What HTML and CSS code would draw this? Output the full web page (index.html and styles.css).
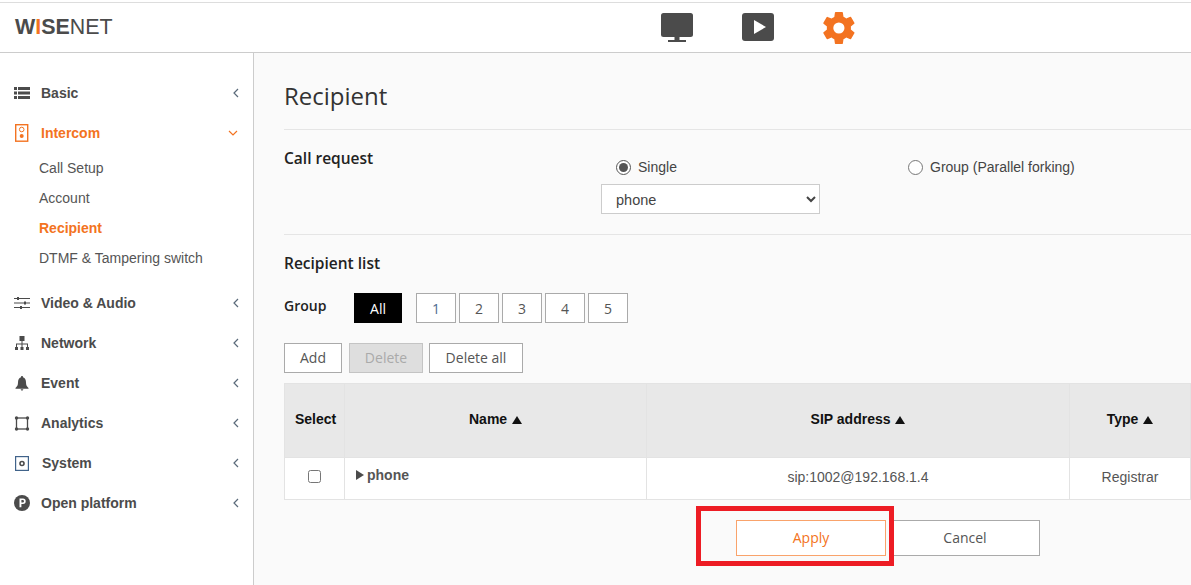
FILE: index.html
```html
<!DOCTYPE html>
<html lang="en">
<head>
<meta charset="utf-8">
<title>Recipient</title>
<link rel="stylesheet" href="styles.css">
</head>
<body>
<header class="topbar">
  <div class="logo"><span class="logo-strong">W<span class="logo-i">I</span>SE</span><span class="logo-light">NET</span></div>
  <nav class="topnav">
    <svg class="topicon" width="32" height="29" viewBox="0 0 32 29"><rect width="32" height="24" rx="2.5" fill="#4b4b4b"/><rect x="13.500" y="24" width="5" height="3" fill="#4b4b4b"/><rect x="7" y="27" width="18" height="2" fill="#4b4b4b"/></svg>
    <svg class="topicon" width="32" height="28" viewBox="0 0 32 28"><rect width="32" height="28" rx="3" fill="#4b4b4b"/><path d="M12 7v14l12-7z" fill="#fff"/></svg>
    <svg class="topicon gear" width="32" height="32" viewBox="2 2 20 20"><path fill="#f37321" d="M19.4 13c.04-.33.06-.66.06-1s-.02-.67-.06-1l2.100-1.650a.5.5 0 0 0 .12-.64l-2-3.460a.5.5 0 0 0-.6-.22l-2.490 1a7.300 7.300 0 0 0-1.730-1l-.38-2.650A.5.5 0 0 0 13.930 2h-4a.5.5 0 0 0-.49.42L9.060 5.070c-.62.25-1.200.59-1.730 1l-2.490-1a.5.5 0 0 0-.6.22l-2 3.460a.5.5 0 0 0 .12.64L4.460 11a8 8 0 0 0 0 2l-2.100 1.650a.5.5 0 0 0-.12.64l2 3.460c.12.22.38.3.6.22l2.490-1c.53.41 1.110.75 1.730 1l.38 2.650c.04.24.25.42.49.42h4c.24 0 .45-.18.49-.42l.38-2.650c.62-.25 1.200-.59 1.730-1l2.490 1c.22.08.48 0 .6-.22l2-3.460a.5.5 0 0 0-.12-.64zM11.930 15.500a3.500 3.500 0 1 1 0-7 3.500 3.500 0 0 1 0 7z"/></svg>
  </nav>
</header>
<div class="shell">
  <aside class="sidebar">
    <div class="menu-item">
      <svg class="mi-icon" width="16" height="12" viewBox="0 0 16 12"><path fill="#4b4b4b" d="M0 0h3v3H0zM4 0h12v3H4zM0 4.500h3v3H0zM4 4.500h12v3H4zM0 9h3v3H0zM4 9h12v3H4z"/></svg>
      <span class="mi-label">Basic</span>
      <svg class="chev" width="6" height="10" viewBox="0 0 6 10"><path d="M5 1 1 5l4 4" fill="none" stroke="#5a6a7a" stroke-width="1.200"/></svg>
    </div>
    <div class="menu-item active">
      <svg class="mi-icon" width="16" height="18" viewBox="0 0 16 18"><rect x="1.700" y="0.700" width="12" height="16.500" fill="none" stroke="#f37321" stroke-width="1.400"/><circle cx="7.700" cy="5.500" r="2.300" fill="none" stroke="#f37321"/><circle cx="7.700" cy="12" r="2" fill="#f37321"/></svg>
      <span class="mi-label">Intercom</span>
      <svg class="chev-down" width="10" height="6" viewBox="0 0 10 6"><path d="M1 1l4 4 4-4" fill="none" stroke="#f37321" stroke-width="1.200"/></svg>
    </div>
    <ul class="submenu">
      <li>Call Setup</li>
      <li>Account</li>
      <li class="current">Recipient</li>
      <li>DTMF &amp; Tampering switch</li>
    </ul>
    <div class="menu-item">
      <svg class="mi-icon" width="16" height="12" viewBox="0 0 16 12"><path fill="#4b4b4b" d="M0 1h16v1H0zM0 5.500h16v1H0zM0 10h16v1H0zM3 0h2v3H3zM10 4.500h2v3h-2zM6 9h2v3H6z"/></svg>
      <span class="mi-label">Video &amp; Audio</span>
      <svg class="chev" width="6" height="10" viewBox="0 0 6 10"><path d="M5 1 1 5l4 4" fill="none" stroke="#5a6a7a" stroke-width="1.200"/></svg>
    </div>
    <div class="menu-item">
      <svg class="mi-icon" width="16" height="15" viewBox="0 0 16 15"><path fill="#4b4b4b" d="M5.500 0h5v5h-5zM7.500 5h1v3h-1zM2 7.500h12v1H2zM2 8h1v3H2zM7.500 8h1v3h-1zM13 8h1v3h-1zM1 11h3v3H1zM6.500 11h3v3h-3zM12 11h3v3h-3z"/></svg>
      <span class="mi-label">Network</span>
      <svg class="chev" width="6" height="10" viewBox="0 0 6 10"><path d="M5 1 1 5l4 4" fill="none" stroke="#5a6a7a" stroke-width="1.200"/></svg>
    </div>
    <div class="menu-item">
      <svg class="mi-icon" width="16" height="15" viewBox="0 0 16 15"><path fill="#4b4b4b" d="M8 0a1 1 0 0 1 1 1.200C11.200 2 12 4 12 6.500c0 2.500.8 4 2.500 5.500v.8h-13V12C3.200 10.500 4 9 4 6.500 4 4 4.800 2 7 1.200A1 1 0 0 1 8 0zM6.500 13.300h3L8 15z"/></svg>
      <span class="mi-label">Event</span>
      <svg class="chev" width="6" height="10" viewBox="0 0 6 10"><path d="M5 1 1 5l4 4" fill="none" stroke="#5a6a7a" stroke-width="1.200"/></svg>
    </div>
    <div class="menu-item">
      <svg class="mi-icon" width="16" height="15" viewBox="0 0 16 15"><rect x="2.500" y="2" width="11" height="11" fill="none" stroke="#4b4b4b" stroke-width="1.300"/><g fill="#4b4b4b"><circle cx="2.500" cy="2" r="1.700"/><circle cx="13.500" cy="2" r="1.700"/><circle cx="2.500" cy="13" r="1.700"/><circle cx="13.500" cy="13" r="1.700"/></g></svg>
      <span class="mi-label">Analytics</span>
      <svg class="chev" width="6" height="10" viewBox="0 0 6 10"><path d="M5 1 1 5l4 4" fill="none" stroke="#5a6a7a" stroke-width="1.200"/></svg>
    </div>
    <div class="menu-item">
      <svg class="mi-icon" width="16" height="15" viewBox="0 0 16 15"><rect x="1.600" y="0.600" width="12.800" height="13.800" fill="none" stroke="#41638a" stroke-width="1.200"/><circle cx="8" cy="7.500" r="2" fill="none" stroke="#4b4b4b" stroke-width="1.600"/></svg>
      <span class="mi-label mi-label-system">System</span>
      <svg class="chev" width="6" height="10" viewBox="0 0 6 10"><path d="M5 1 1 5l4 4" fill="none" stroke="#5a6a7a" stroke-width="1.200"/></svg>
    </div>
    <div class="menu-item">
      <svg class="mi-icon" width="16" height="16" viewBox="0 0 16 16"><circle cx="8" cy="8" r="8" fill="#4b4b4b"/><path fill="#fff" fill-rule="evenodd" d="M5.500 3.500H9a2.700 2.700 0 0 1 0 5.400H7.400v3.300H5.500zM7.400 5v2.400H8.800a1.200 1.200 0 0 0 0-2.400z"/></svg>
      <span class="mi-label">Open platform</span>
      <svg class="chev" width="6" height="10" viewBox="0 0 6 10"><path d="M5 1 1 5l4 4" fill="none" stroke="#5a6a7a" stroke-width="1.200"/></svg>
    </div>
  </aside>
  <main class="content">
    <h1 class="page-title">Recipient</h1>
    <section class="call-section">
      <h2 class="section-title call-title">Call request</h2>
      <div class="call-options">
        <div class="radios">
          <label class="radio-one"><input type="radio" name="mode" class="radio" checked>Single</label>
          <label class="radio-two"><input type="radio" name="mode" class="radio">Group (Parallel forking)</label>
        </div>
        <select class="select"><option>phone</option></select>
      </div>
    </section>
    <section class="list-section">
      <h2 class="section-title">Recipient list</h2>
      <div class="group-row">
        <span class="group-label">Group</span>
        <button class="tab tab-all">All</button>
        <div class="tabs">
          <button class="tab tab-1">1</button>
          <button class="tab">2</button>
          <button class="tab">3</button>
          <button class="tab">4</button>
          <button class="tab">5</button>
        </div>
      </div>
      <div class="action-row">
        <button class="btn btn-add">Add</button>
        <button class="btn btn-disabled">Delete</button>
        <button class="btn btn-delall">Delete all</button>
      </div>
      <table class="table">
        <colgroup><col class="c1"><col class="c2"><col class="c3"><col class="c4"></colgroup>
        <thead>
          <tr><th class="th-select">Select</th><th>Name <span class="sort"></span></th><th>SIP address <span class="sort"></span></th><th>Type <span class="sort"></span></th></tr>
        </thead>
        <tbody>
          <tr>
            <td><input type="checkbox" class="check"></td>
            <td class="name-cell"><span class="tri"></span>phone</td>
            <td>sip:1002@192.168.1.4</td>
            <td>Registrar</td>
          </tr>
        </tbody>
      </table>
      <div class="footer-row">
        <button class="foot-btn apply">Apply</button>
        <button class="foot-btn cancel">Cancel</button>
      </div>
    </section>
  </main>
</div>
<div class="highlight"></div>
</body>
</html>
```
FILE: styles.css
```css
* { box-sizing: border-box; }
html, body { margin: 0; height: 100%; overflow: hidden; }
body { background: #fff; font-family: "Liberation Sans", Arial, sans-serif; color: #4b4b4b; position: relative; }

.topbar { margin-top: 2px; border-top: 1px solid #ddd; border-bottom: 1px solid #ccc; display: flex; align-items: center; position: relative; padding-left: 15px; background: #fff; height: 51px; }
.logo { font-size: 21.400px; line-height: 1; color: #4b4b4b; display: flex; }
.logo-strong { font-weight: 700; }
.logo-i { color: #f37321; }
.logo-light { font-weight: 400; }
.topnav { display: flex; align-items: flex-start; position: absolute; left: 661px; top: 10px; gap: 49px; }
.topicon { display: block; flex: none; }
.gear { margin-top: -1px; }

.shell { display: flex; height: 532px; }
.sidebar { width: 254px; flex: none; background: #fff; border-right: 1px solid #ccc; padding-top: 20px; }
.menu-item { height: 40px; display: flex; align-items: center; padding-left: 14px; padding-right: 14px; font-weight: 700; font-size: 14px; color: #4b4b4b; }
.mi-icon { flex: none; width: 16px; margin-right: 11px; }
.mi-label { flex: 1; }
.mi-label-system { padding-left: 1px; }
.chev { flex: none; }
.chev-down { flex: none; margin-right: 1px; }
.menu-item.active { color: #f37321; }
.submenu { list-style: none; margin: 0; padding: 0 0 10px 39px; font-size: 14px; color: #555; }
.submenu li { height: 30px; line-height: 30px; }
.submenu .current { color: #f37321; font-weight: 700; }

.content { flex: 1; min-width: 0; background: #fafafa; padding-left: 30px; }
.page-title { margin: 0; height: 77px; line-height: 86px; font-family: "Open Sans", sans-serif; font-weight: 400; font-size: 24px; color: #333; border-bottom: 1px solid #e5e5e5; }
.call-section { height: 105px; border-bottom: 1px solid #e5e5e5; display: flex; }
.section-title { margin: 0; font-family: "Open Sans", sans-serif; font-weight: 600; font-size: 15.500px; color: #222; }
.call-title { width: 317px; flex: none; padding-top: 16px; line-height: 24px; }
.call-options { flex: 1; }
.radios { display: flex; font-size: 14px; color: #444; padding-top: 27px; height: 54px; line-height: 20px; }
.radios label { display: flex; align-items: center; height: 20px; }
.radio-one { margin-left: 15px; width: 292px; }
.radio { margin: 0 7px 0 0; width: 15px; height: 15px; accent-color: #555; }
.select { display: block; width: 219px; height: 30px; border: 1px solid #ccc; background: #fff; font-family: "Liberation Sans", sans-serif; font-size: 14.500px; color: #444; padding: 2px 0 0 10px; }

.list-section .section-title { line-height: 24px; padding-top: 16px; height: 43px; }
.group-row { height: 50px; display: flex; align-items: flex-start; padding-top: 15px; }
.group-label { width: 70px; font-family: "Open Sans", sans-serif; font-weight: 600; font-size: 14px; color: #222; line-height: 25px; flex: none; }
.tab { height: 30px; width: 40px; border: 1px solid #aaa; background: #fff; font-family: "Open Sans", sans-serif; font-size: 14px; color: #555; padding: 0; }
.tabs { display: flex; gap: 3px; margin-left: 14px; }
.tab-1 { color: #4c6a8f; }
.tab-all { width: 48px; background: #000; border-color: #000; color: #fff; }
.action-row { display: flex; padding-top: 15px; height: 55px; }
.btn { height: 30px; border: 1px solid #aaa; background: #fff; font-family: "Open Sans", sans-serif; font-size: 14px; color: #555; padding: 0 0 2px; }
.btn-add { width: 58px; margin-right: 7px; }
.btn-disabled { width: 74px; margin-right: 6px; background: #dedede; border-color: #c4c4c4; color: #aaa; }
.btn-delall { width: 94px; }

.table { width: 906px; table-layout: fixed; border-collapse: collapse; font-size: 14px; background: #fff; }
.c1 { width: 60px; } .c2 { width: 302px; } .c3 { width: 423px; } .c4 { width: 121px; }
.table th, .table td { border: 1px solid #e3e3e3; text-align: center; padding: 0; }
.table th { background: #e8e8e8; height: 74px; color: #111; font-weight: 700; padding-bottom: 4px; }
.table .th-select { padding-left: 2px; }
.table td { height: 42px; color: #555; padding-bottom: 3px; }
.sort { display: inline-block; width: 0; height: 0; border-left: 5px solid transparent; border-right: 5px solid transparent; border-bottom: 8px solid #111; margin-left: 1px; }
.check { display: block; width: 13px; height: 13px; margin: -1px auto 0; accent-color: #555; }
.table .name-cell { text-align: left; font-weight: 700; padding: 0 0 8px 11px; }
.tri { display: inline-block; width: 0; height: 0; border-top: 5px solid transparent; border-bottom: 5px solid transparent; border-left: 8px solid #4b4b4b; margin-right: 3px; }

.footer-row { display: flex; padding: 20px 0 0 452px; }
.foot-btn { height: 36px; background: #fff; font-family: "Open Sans", sans-serif; font-size: 14px; padding: 0 0 2px; }
.apply { width: 150px; margin-right: 4px; border: 1px solid #f9a36b; color: #f37321; }
.cancel { width: 150px; border: 1px solid #aaa; color: #555; }

.highlight { position: absolute; left: 696px; top: 506px; width: 198px; height: 60px; border: 5px solid #ed1c24; pointer-events: none; }
```
